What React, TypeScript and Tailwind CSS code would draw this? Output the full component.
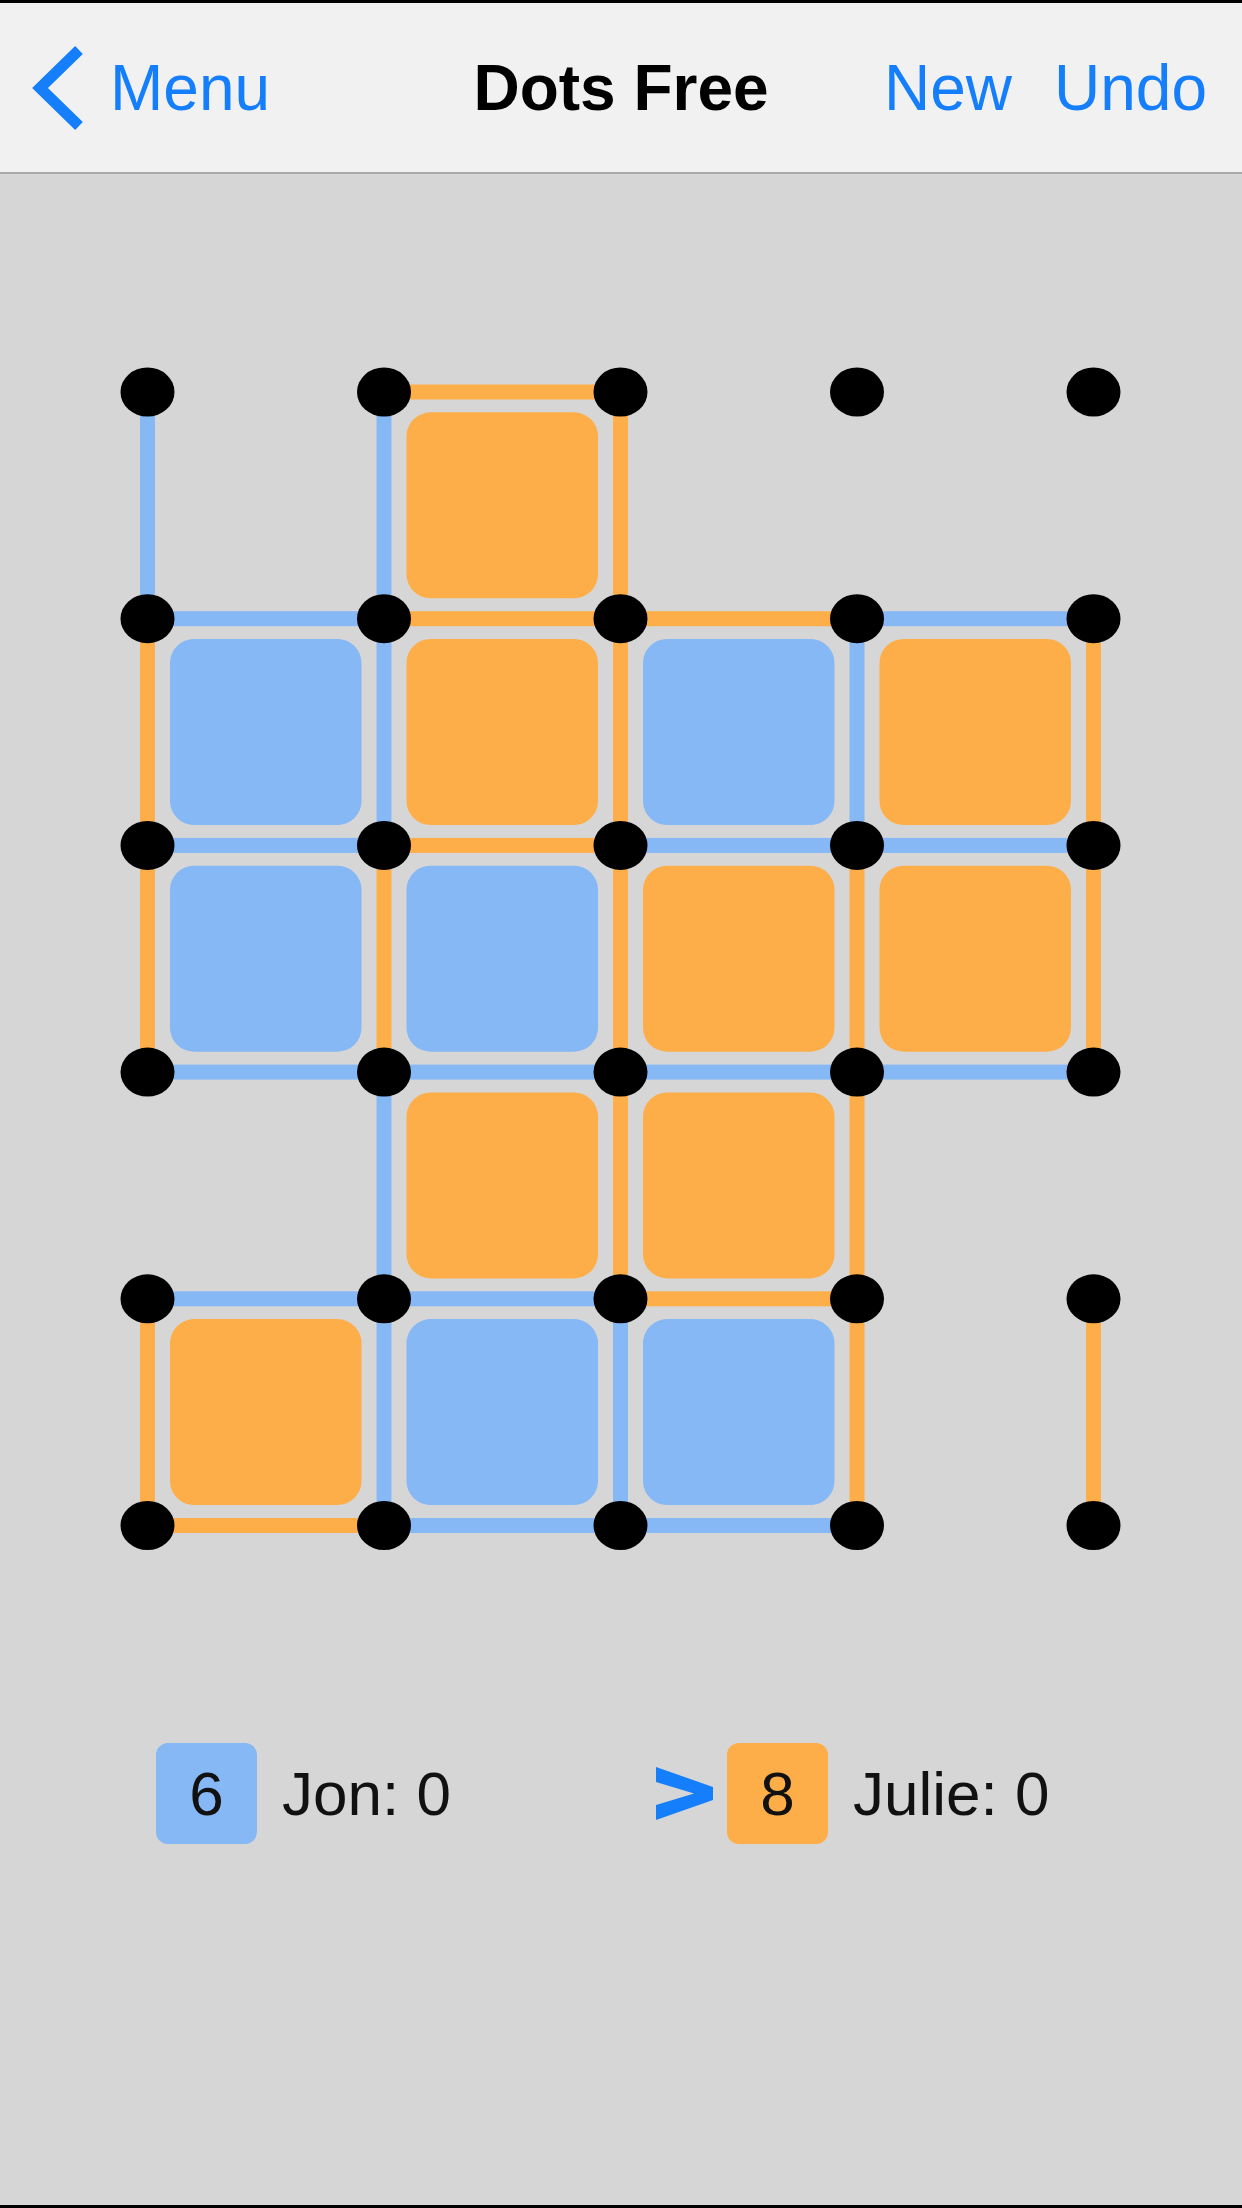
type Owner = 'b' | 'o' | null;

const BLUE = '#85b8f4';
const ORANGE = '#feae48';

// board geometry, in svg units (1 unit = 1 px)
const X0 = 37.5;
const Y0 = 42;
const DX = 236.5;
const DY = 226.7;
const LINE = 15;

const cx = (c: number) => X0 + c * DX;
const cy = (r: number) => Y0 + r * DY;
const fill = (o: Owner) => (o === 'b' ? BLUE : ORANGE);

const hEdges: Owner[][] = [
  [null, 'o', null, null],
  ['b', 'o', 'o', 'b'],
  ['b', 'o', 'b', 'b'],
  ['b', 'b', 'b', 'b'],
  ['b', 'b', 'o', null],
  ['o', 'b', 'b', null],
];

const vEdges: Owner[][] = [
  ['b', 'b', 'o', null, null],
  ['o', 'b', 'o', 'b', 'o'],
  ['o', 'o', 'o', 'o', 'o'],
  [null, 'b', 'o', 'o', null],
  ['o', 'b', 'b', 'o', 'o'],
];

const boxes: Owner[][] = [
  [null, 'o', null, null],
  ['b', 'o', 'b', 'o'],
  ['b', 'b', 'o', 'o'],
  [null, 'o', 'o', null],
  ['o', 'b', 'b', null],
];

const Board = () => (
  <svg width={1022} height={1210} viewBox="0 0 1022 1210" className="ml-[110px] mt-[176px]">
    {boxes.map((row, r) =>
      row.map((o, c) =>
        o ? (
          <rect
            key={`box-${r}-${c}`}
            x={cx(c) + 22.5}
            y={cy(r) + 20.3}
            width={191.5}
            height={186}
            rx={24}
            fill={fill(o)}
          />
        ) : null
      )
    )}
    {hEdges.map((row, r) =>
      row.map((o, c) =>
        o ? (
          <rect
            key={`h-${r}-${c}`}
            x={cx(c)}
            y={cy(r) - LINE / 2}
            width={DX}
            height={LINE}
            fill={fill(o)}
          />
        ) : null
      )
    )}
    {vEdges.map((row, r) =>
      row.map((o, c) =>
        o ? (
          <rect
            key={`v-${r}-${c}`}
            x={cx(c) - LINE / 2}
            y={cy(r)}
            width={LINE}
            height={DY}
            fill={fill(o)}
          />
        ) : null
      )
    )}
    {[0, 1, 2, 3, 4, 5].map((r) =>
      [0, 1, 2, 3, 4].map((c) => (
        <ellipse key={`d-${r}-${c}`} cx={cx(c)} cy={cy(r)} rx={27} ry={24.5} fill="#000" />
      ))
    )}
  </svg>
);

const ScoreBox = ({ color, value }: { color: string; value: number }) => (
  <div
    className="w-[101px] h-[101px] rounded-[12px] flex items-center justify-center"
    style={{ backgroundColor: color }}
  >
    {value}
  </div>
);

export default function App() {
  return (
    <div
      className="w-[1242px] h-[2208px] bg-[#d6d6d6] border-b-[3px] border-black overflow-hidden"
      style={{ fontFamily: '"Liberation Sans", Arial, sans-serif' }}
    >
      <header className="h-[174px] bg-[#f1f1f1] border-t-[3px] border-b-2 border-t-black border-b-[#a9a9a9] grid grid-cols-3 items-center text-[64px] leading-none">
        <div className="flex items-center pl-[30px] text-[#157efb]">
          <svg width={56} height={86} viewBox="0 0 56 86">
            <polyline points="49,5 10,43 49,81" fill="none" stroke="#157efb" strokeWidth={11} />
          </svg>
          <span className="ml-[24px]">Menu</span>
        </div>
        <div className="text-center font-bold text-black">Dots Free</div>
        <div className="flex items-center justify-end gap-[42px] pr-[35px] text-[#157efb]">
          <span>New</span>
          <span>Undo</span>
        </div>
      </header>

      <Board />

      <div className="mt-[183px] pl-[156px] flex items-center text-[62px] leading-none text-[#111]">
        <div className="w-[500px] flex items-center">
          <ScoreBox color={BLUE} value={6} />
          <span className="ml-[25px]">Jon: 0</span>
        </div>
        <div className="flex items-center">
          <svg width={57} height={53} viewBox="0 0 57 53">
            <polygon points="0,0 57,20 57,33 0,53 0,38 38,26.5 0,15" fill="#157efb" />
          </svg>
          <div className="ml-[14px]">
            <ScoreBox color={ORANGE} value={8} />
          </div>
          <span className="ml-[25px]">Julie: 0</span>
        </div>
      </div>
    </div>
  );
}
